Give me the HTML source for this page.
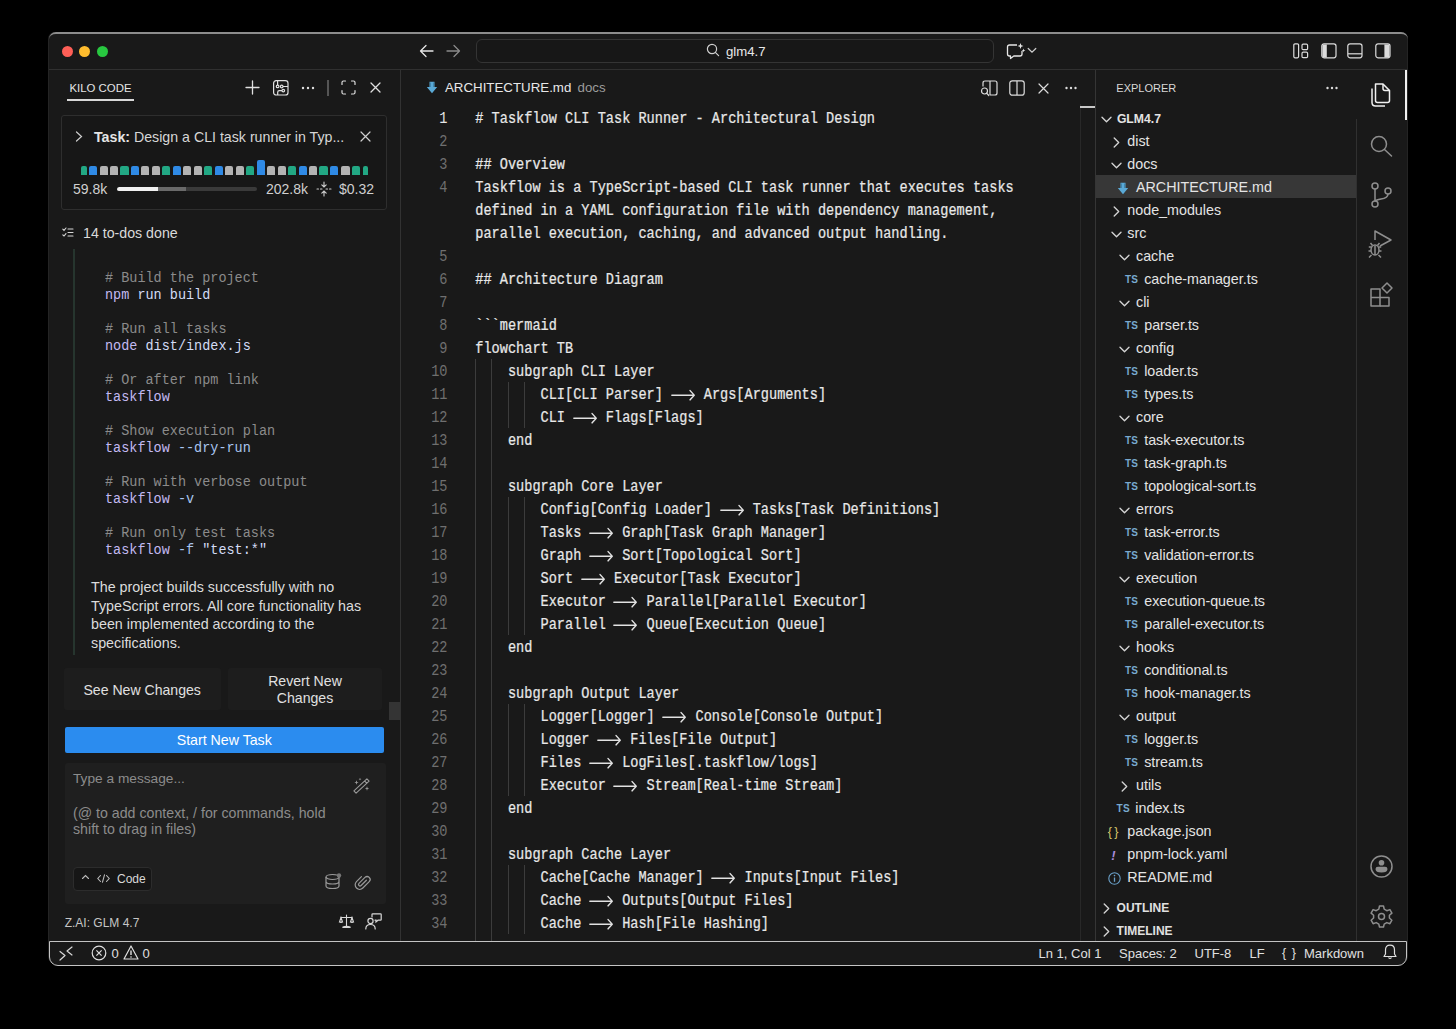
<!DOCTYPE html>
<html><head><meta charset="utf-8">
<style>
*{margin:0;padding:0;box-sizing:border-box}
html,body{width:1456px;height:1029px;overflow:hidden;background:#000}
body{position:relative;font-family:"Liberation Sans",sans-serif;color:#d4d4d4}
.a{position:absolute}
.t{position:absolute;white-space:pre;line-height:1}
svg{position:absolute;overflow:visible}
</style></head><body>
<div class="a" style="left:48px;top:32px;width:1360px;height:933px;background:#191919;border-left:1px solid #242424;border-right:1px solid #242424;border-radius:7px 7px 9px 9px;overflow:hidden"></div>
<div class="a" style="left:48.5px;top:32px;width:1359px;height:12px;border-top:2px solid #8c8c8c;border-radius:7px 7px 0 0"></div>
<div class="a" style="left:49px;top:69px;width:1358px;height:1px;background:#303030;"></div>
<div class="a" style="left:61.7px;top:45.5px;width:11px;height:11px;border-radius:50%;background:#fe5f57"></div>
<div class="a" style="left:79.3px;top:45.5px;width:11px;height:11px;border-radius:50%;background:#febc2e"></div>
<div class="a" style="left:96.7px;top:45.5px;width:11px;height:11px;border-radius:50%;background:#28c840"></div>
<svg style="left:419px;top:44px" width="15" height="14" viewBox="0 0 15 14" ><path d="M1.5 7H14M7 1.5L1.5 7L7 12.5" fill="none" stroke="#e6e6e6" stroke-width="1.3" stroke-linecap="round" stroke-linejoin="round"/></svg>
<svg style="left:446px;top:44px" width="15" height="14" viewBox="0 0 15 14" ><path d="M1 7H13.5M8 1.5L13.5 7L8 12.5" fill="none" stroke="#8a8a8a" stroke-width="1.3" stroke-linecap="round" stroke-linejoin="round"/></svg>
<div class="a" style="left:476px;top:39px;width:518px;height:24px;border:1px solid #343434;border-radius:6px;background:#171717"></div>
<svg style="left:706px;top:43px" width="14" height="14" viewBox="0 0 14 14" ><circle cx="6" cy="6" r="4.6" fill="none" stroke="#cfcfcf" stroke-width="1.2"/><path d="M9.3 9.3L12.6 12.6" stroke="#cfcfcf" stroke-width="1.2" stroke-linecap="round"/></svg>
<div class="t" style="left:726.0px;top:44.65px;font-size:13.2px;color:#e8e8e8;">glm4.7</div>
<svg style="left:1006px;top:42px" width="20" height="18" viewBox="0 0 20 18" ><path d="M11 3H3.5Q1.5 3 1.5 5V12Q1.5 14 3.5 14H4.5V16.5L7.8 14H14Q16 14 16 12V9" fill="none" stroke="#e6e6e6" stroke-width="1.3" stroke-linejoin="round"/><path d="M14.5 1L15.3 3.2L17.5 4L15.3 4.8L14.5 7L13.7 4.8L11.5 4L13.7 3.2Z M17.5 6.5L18 7.9L19.4 8.4L18 8.9L17.5 10.3L17 8.9L15.6 8.4L17 7.9Z" fill="#e6e6e6"/></svg>
<svg style="left:1027px;top:47px" width="10" height="7" viewBox="0 0 10 7" ><path d="M1.2 1.5L5 5.2L8.8 1.5" fill="none" stroke="#cfcfcf" stroke-width="1.2" stroke-linecap="round"/></svg>
<svg style="left:1293px;top:43px" width="16" height="16" viewBox="0 0 16 16" ><g fill="none" stroke="#dcdcdc" stroke-width="1.2"><rect x="0.8" y="0.8" width="4.8" height="14" rx="1.2"/><rect x="9" y="1.2" width="5.6" height="5.4" rx="1.2"/><rect x="9" y="9.2" width="5.6" height="5.4" rx="1.2"/></g></svg>
<svg style="left:1321px;top:43px" width="16" height="16" viewBox="0 0 16 16" ><rect x="0.8" y="0.8" width="14.2" height="14" rx="2.2" fill="none" stroke="#dcdcdc" stroke-width="1.2"/><path d="M1.4 3Q1.4 1.4 3 1.4H5.8V14.4H3Q1.4 14.4 1.4 12.8Z" fill="#dcdcdc"/></svg>
<svg style="left:1347px;top:43px" width="16" height="16" viewBox="0 0 16 16" ><g fill="none" stroke="#dcdcdc" stroke-width="1.2"><rect x="0.8" y="0.8" width="14.2" height="14" rx="2.2"/><path d="M1 10.8H15"/></g></svg>
<svg style="left:1375px;top:43px" width="16" height="16" viewBox="0 0 16 16" ><rect x="0.8" y="0.8" width="14.2" height="14" rx="2.2" fill="none" stroke="#dcdcdc" stroke-width="1.2"/><path d="M14.4 3Q14.4 1.4 12.8 1.4H9.4V14.4H12.8Q14.4 14.4 14.4 12.8Z" fill="#dcdcdc"/></svg>
<div class="a" style="left:400px;top:70px;width:1px;height:872px;background:#323232;"></div>
<div class="a" style="left:1095px;top:70px;width:1px;height:872px;background:#353535;"></div>
<div class="a" style="left:1356px;top:119px;width:1px;height:823px;background:#303030;"></div>
<div class="t" style="left:69.5px;top:82.77px;font-size:11.4px;color:#e6e6e6;">KILO CODE</div>
<div class="a" style="left:67px;top:99px;width:67px;height:1.5px;background:#d8d8d8;"></div>
<svg style="left:245px;top:80px" width="15" height="15" viewBox="0 0 15 15" ><path d="M7.5 1V14M1 7.5H14" stroke="#e0e0e0" stroke-width="1.3" stroke-linecap="round"/></svg>
<svg style="left:273px;top:80px" width="16" height="16" viewBox="0 0 16 16" ><g fill="none" stroke="#e0e0e0" stroke-width="1.2"><rect x="0.6" y="0.6" width="14.4" height="14.4" rx="2.6"/><path d="M4.6 0.8V5M10 6.5H15M4.7 15V12.2Q4.7 10.6 6.3 10.6H9"/><circle cx="4.6" cy="6.4" r="1.3"/><circle cx="8.7" cy="6.5" r="1.3"/><circle cx="10.3" cy="10.6" r="1.3"/></g></svg>
<svg style="left:301px;top:86px" width="14" height="4" viewBox="0 0 14 4" ><g fill="#e0e0e0"><circle cx="2" cy="2" r="1.2"/><circle cx="7" cy="2" r="1.2"/><circle cx="12" cy="2" r="1.2"/></g></svg>
<div class="a" style="left:327px;top:80px;width:1.5px;height:16px;background:#555;"></div>
<svg style="left:341px;top:80px" width="15" height="15" viewBox="0 0 15 15" ><path d="M1 4.5V2.5Q1 1 2.5 1H4.5M10.5 1H12.5Q14 1 14 2.5V4.5M14 10.5V12.5Q14 14 12.5 14H10.5M4.5 14H2.5Q1 14 1 12.5V10.5" fill="none" stroke="#e0e0e0" stroke-width="1.2" stroke-linecap="round"/></svg>
<svg style="left:370px;top:82px" width="11" height="11" viewBox="0 0 11 11" ><path d="M1 1L10 10M10 1L1 10" stroke="#e0e0e0" stroke-width="1.3" stroke-linecap="round"/></svg>
<div class="a" style="left:61px;top:115px;width:326px;height:95px;border:1px solid #2e2e2e;border-radius:3px;background:#171717"></div>
<svg style="left:75px;top:131px" width="8" height="11" viewBox="0 0 8 11" ><path d="M1.5 1L6.5 5.5L1.5 10" fill="none" stroke="#cfcfcf" stroke-width="1.2" stroke-linecap="round"/></svg>
<div class="t" style="left:94.0px;top:129.60px;font-size:14.2px;color:#d6d6d6;"><b style="color:#e4e4e4">Task:</b> Design a CLI task runner in Typ...</div>
<svg style="left:360px;top:131px" width="11" height="11" viewBox="0 0 11 11" ><path d="M1 1L10 10M10 1L1 10" stroke="#d0d0d0" stroke-width="1.2" stroke-linecap="round"/></svg>
<div class="a" style="left:81.0px;top:165.5px;width:6px;height:9.0px;background:#22a884;border-radius:2px 2px 0 0"></div>
<div class="a" style="left:89.1px;top:165.5px;width:8.2px;height:9.0px;background:#2f8ae6;border-radius:2px 2px 0 0"></div>
<div class="a" style="left:99.6px;top:165.5px;width:8.2px;height:9.0px;background:#b3b3b3;border-radius:2px 2px 0 0"></div>
<div class="a" style="left:110.1px;top:165.5px;width:8.2px;height:9.0px;background:#b3b3b3;border-radius:2px 2px 0 0"></div>
<div class="a" style="left:120.4px;top:165.5px;width:8.2px;height:9.0px;background:#22a884;border-radius:2px 2px 0 0"></div>
<div class="a" style="left:131.0px;top:165.5px;width:8.2px;height:9.0px;background:#2f8ae6;border-radius:2px 2px 0 0"></div>
<div class="a" style="left:141.3px;top:165.5px;width:8.2px;height:9.0px;background:#b3b3b3;border-radius:2px 2px 0 0"></div>
<div class="a" style="left:151.9px;top:165.5px;width:8.2px;height:9.0px;background:#b3b3b3;border-radius:2px 2px 0 0"></div>
<div class="a" style="left:162.3px;top:165.5px;width:8.2px;height:9.0px;background:#22a884;border-radius:2px 2px 0 0"></div>
<div class="a" style="left:172.9px;top:165.5px;width:8.2px;height:9.0px;background:#2f8ae6;border-radius:2px 2px 0 0"></div>
<div class="a" style="left:183.3px;top:165.5px;width:8.2px;height:9.0px;background:#b3b3b3;border-radius:2px 2px 0 0"></div>
<div class="a" style="left:193.6px;top:165.5px;width:8.2px;height:9.0px;background:#b3b3b3;border-radius:2px 2px 0 0"></div>
<div class="a" style="left:204.2px;top:165.5px;width:8.2px;height:9.0px;background:#22a884;border-radius:2px 2px 0 0"></div>
<div class="a" style="left:214.6px;top:165.5px;width:8.2px;height:9.0px;background:#2f8ae6;border-radius:2px 2px 0 0"></div>
<div class="a" style="left:224.9px;top:165.5px;width:8.2px;height:9.0px;background:#b3b3b3;border-radius:2px 2px 0 0"></div>
<div class="a" style="left:235.6px;top:165.5px;width:8.2px;height:9.0px;background:#b3b3b3;border-radius:2px 2px 0 0"></div>
<div class="a" style="left:246.1px;top:165.5px;width:8.2px;height:9.0px;background:#22a884;border-radius:2px 2px 0 0"></div>
<div class="a" style="left:256.5px;top:159.5px;width:8.2px;height:15.0px;background:#2f8ae6;border-radius:2px 2px 0 0"></div>
<div class="a" style="left:267.1px;top:165.5px;width:8.2px;height:9.0px;background:#b3b3b3;border-radius:2px 2px 0 0"></div>
<div class="a" style="left:277.5px;top:165.5px;width:8.2px;height:9.0px;background:#b3b3b3;border-radius:2px 2px 0 0"></div>
<div class="a" style="left:287.9px;top:165.5px;width:8.2px;height:9.0px;background:#22a884;border-radius:2px 2px 0 0"></div>
<div class="a" style="left:298.5px;top:165.5px;width:8.2px;height:9.0px;background:#2f8ae6;border-radius:2px 2px 0 0"></div>
<div class="a" style="left:308.9px;top:165.5px;width:8.2px;height:9.0px;background:#b3b3b3;border-radius:2px 2px 0 0"></div>
<div class="a" style="left:319.4px;top:165.5px;width:8.2px;height:9.0px;background:#22a884;border-radius:2px 2px 0 0"></div>
<div class="a" style="left:330.2px;top:165.5px;width:8.2px;height:9.0px;background:#2f8ae6;border-radius:2px 2px 0 0"></div>
<div class="a" style="left:341.4px;top:165.5px;width:8.2px;height:9.0px;background:#b3b3b3;border-radius:2px 2px 0 0"></div>
<div class="a" style="left:351.5px;top:165.5px;width:8.2px;height:9.0px;background:#22a884;border-radius:2px 2px 0 0"></div>
<div class="a" style="left:362.5px;top:165.5px;width:5px;height:9.0px;background:#22a884;border-radius:2px 2px 0 0"></div>
<div class="t" style="left:73.0px;top:182.17px;font-size:14px;color:#d0d0d0;">59.8k</div>
<div class="a" style="left:117px;top:186.5px;width:140px;height:4.5px;border-radius:3px;background:#3a3a3a;overflow:hidden"><div class="a" style="left:0;top:0;width:69px;height:5px;background:#6a6a6a"></div><div class="a" style="left:0;top:0;width:41px;height:5px;background:#f0f0f0;border-radius:3px 0 0 3px"></div></div>
<div class="t" style="left:266.0px;top:182.17px;font-size:14px;color:#d0d0d0;">202.8k</div>
<svg style="left:316px;top:181px" width="16" height="16" viewBox="0 0 16 16" ><path d="M8 1V6M5.8 3.8L8 6L10.2 3.8M8 15V10M5.8 12.2L8 10L10.2 12.2M1 8H2.5M4.5 8H6M10 8H11.5M13.5 8H15" fill="none" stroke="#cfcfcf" stroke-width="1.1" stroke-linecap="round"/></svg>
<div class="t" style="left:339.0px;top:182.17px;font-size:14px;color:#d0d0d0;">$0.32</div>
<svg style="left:62px;top:227px" width="12" height="11" viewBox="0 0 12 11" ><path d="M0.8 2.2L2 3.4L4 1M0.8 7.8L2 9L4 6.6M6 2H11M6 5.5H11M6 9H11" fill="none" stroke="#d8d8d8" stroke-width="1.1" stroke-linecap="round"/></svg>
<div class="t" style="left:83.0px;top:225.70px;font-size:14.2px;color:#dadada;">14 to-dos done</div>
<div class="a" style="left:73px;top:249px;width:1.5px;height:406px;background:#26352e;"></div>
<div class="t" style="left:105.0px;top:272.31px;font-size:13.5px;color:#ccc;font-family:'Liberation Mono',monospace;transform:scaleY(1.08);transform-origin:0 5.74px;"><span style="color:#8b8b8b"># Build the project</span></div>
<div class="t" style="left:105.0px;top:289.31px;font-size:13.5px;color:#ccc;font-family:'Liberation Mono',monospace;transform:scaleY(1.08);transform-origin:0 5.74px;"><span style="color:#c3b9f2">npm</span><span style="color:#d3dcf5"> run build</span></div>
<div class="t" style="left:105.0px;top:323.31px;font-size:13.5px;color:#ccc;font-family:'Liberation Mono',monospace;transform:scaleY(1.08);transform-origin:0 5.74px;"><span style="color:#8b8b8b"># Run all tasks</span></div>
<div class="t" style="left:105.0px;top:340.31px;font-size:13.5px;color:#ccc;font-family:'Liberation Mono',monospace;transform:scaleY(1.08);transform-origin:0 5.74px;"><span style="color:#c3b9f2">node</span><span style="color:#d3dcf5"> dist/index.js</span></div>
<div class="t" style="left:105.0px;top:374.31px;font-size:13.5px;color:#ccc;font-family:'Liberation Mono',monospace;transform:scaleY(1.08);transform-origin:0 5.74px;"><span style="color:#8b8b8b"># Or after npm link</span></div>
<div class="t" style="left:105.0px;top:391.31px;font-size:13.5px;color:#ccc;font-family:'Liberation Mono',monospace;transform:scaleY(1.08);transform-origin:0 5.74px;"><span style="color:#c3b9f2">taskflow</span></div>
<div class="t" style="left:105.0px;top:425.31px;font-size:13.5px;color:#ccc;font-family:'Liberation Mono',monospace;transform:scaleY(1.08);transform-origin:0 5.74px;"><span style="color:#8b8b8b"># Show execution plan</span></div>
<div class="t" style="left:105.0px;top:442.31px;font-size:13.5px;color:#ccc;font-family:'Liberation Mono',monospace;transform:scaleY(1.08);transform-origin:0 5.74px;"><span style="color:#c3b9f2">taskflow</span><span style="color:#a9c6ef"> --dry-run</span></div>
<div class="t" style="left:105.0px;top:476.31px;font-size:13.5px;color:#ccc;font-family:'Liberation Mono',monospace;transform:scaleY(1.08);transform-origin:0 5.74px;"><span style="color:#8b8b8b"># Run with verbose output</span></div>
<div class="t" style="left:105.0px;top:493.31px;font-size:13.5px;color:#ccc;font-family:'Liberation Mono',monospace;transform:scaleY(1.08);transform-origin:0 5.74px;"><span style="color:#c3b9f2">taskflow</span><span style="color:#a9c6ef"> -v</span></div>
<div class="t" style="left:105.0px;top:527.31px;font-size:13.5px;color:#ccc;font-family:'Liberation Mono',monospace;transform:scaleY(1.08);transform-origin:0 5.74px;"><span style="color:#8b8b8b"># Run only test tasks</span></div>
<div class="t" style="left:105.0px;top:544.31px;font-size:13.5px;color:#ccc;font-family:'Liberation Mono',monospace;transform:scaleY(1.08);transform-origin:0 5.74px;"><span style="color:#c3b9f2">taskflow</span><span style="color:#a9c6ef"> -f </span><span style="color:#d3dcf5">&quot;test:*&quot;</span></div>
<div class="t" style="left:91.0px;top:580.12px;font-size:14.3px;color:#dcdcdc;">The project builds successfully with no</div>
<div class="t" style="left:91.0px;top:598.72px;font-size:14.3px;color:#dcdcdc;">TypeScript errors. All core functionality has</div>
<div class="t" style="left:91.0px;top:617.32px;font-size:14.3px;color:#dcdcdc;">been implemented according to the</div>
<div class="t" style="left:91.0px;top:635.92px;font-size:14.3px;color:#dcdcdc;">specifications.</div>
<div class="a" style="left:64px;top:668px;width:157px;height:42px;background:#1d1d1d;border-radius:3px"></div>
<div class="t" style="left:83.4px;top:683.09px;font-size:14.1px;color:#e0e0e0;">See New Changes</div>
<div class="a" style="left:228px;top:668px;width:154px;height:42px;background:#1d1d1d;border-radius:3px"></div>
<div class="t" style="left:228px;top:673px;width:154px;text-align:center;font-size:14.1px;line-height:17px;color:#e0e0e0;white-space:normal">Revert New<br>Changes</div>
<div class="a" style="left:389px;top:702px;width:11px;height:18px;background:#343434;"></div>
<div class="a" style="left:64.5px;top:727px;width:319.5px;height:26px;background:#2b8cef;border-radius:2px"></div>
<div class="t" style="left:64.5px;top:733.3px;width:319.5px;text-align:center;font-size:14.2px;color:#fff">Start New Task</div>
<div class="a" style="left:64.5px;top:763px;width:321px;height:141px;background:#1f1f1f;border-radius:3px"></div>
<div class="t" style="left:73.0px;top:772.22px;font-size:13.7px;color:#8c8c8c;">Type a message...</div>
<div class="t" style="left:73.0px;top:805.50px;font-size:14.2px;color:#8c8c8c;">(@ to add context, / for commands, hold</div>
<div class="t" style="left:73.0px;top:822.40px;font-size:14.2px;color:#8c8c8c;">shift to drag in files)</div>
<svg style="left:353px;top:777px" width="18" height="18" viewBox="0 0 18 18" ><path d="M3.1 16.2L0.9 13.8L13.9 1.8L16.1 4.2Z M11.6 3.9L13.9 6.3" fill="none" stroke="#9a9a9a" stroke-width="1.1" stroke-linejoin="round"/><g fill="#9a9a9a"><path d="M3.5 3.3L4.1 4.9L5.7 5.5L4.1 6.1L3.5 7.7L2.9 6.1L1.3 5.5L2.9 4.9Z"/><path d="M7 0.8L7.4 1.8L8.4 2.2L7.4 2.6L7 3.6L6.6 2.6L5.6 2.2L6.6 1.8Z"/><path d="M14 9.3L14.6 10.9L16.2 11.5L14.6 12.1L14 13.7L13.4 12.1L11.8 11.5L13.4 10.9Z"/></g></svg>
<div class="a" style="left:72.5px;top:867px;width:79px;height:24px;border:1px solid #2c2c2c;border-radius:4px;background:#161616"></div>
<svg style="left:81px;top:874px" width="9" height="6" viewBox="0 0 9 6" ><path d="M1.5 4.5L4.5 1.5L7.5 4.5" fill="none" stroke="#bbb" stroke-width="1.1" stroke-linecap="round"/></svg>
<svg style="left:97px;top:874px" width="13" height="9" viewBox="0 0 13 9" ><path d="M3.5 1.5L0.8 4.5L3.5 7.5M9.5 1.5L12.2 4.5L9.5 7.5M7.5 0.8L5.5 8.2" fill="none" stroke="#bbb" stroke-width="1.1" stroke-linecap="round"/></svg>
<div class="t" style="left:117.0px;top:872.86px;font-size:12px;color:#d8d8d8;">Code</div>
<svg style="left:325px;top:873px" width="17" height="17" viewBox="0 0 17 17" ><g fill="none" stroke="#9a9a9a" stroke-width="1.2"><ellipse cx="7.5" cy="4" rx="6.5" ry="2.5"/><path d="M1 4V13Q1 15.5 7.5 15.5Q14 15.5 14 13V4M1 8.5Q1 11 7.5 11Q14 11 14 8.5"/></g><circle cx="14" cy="2.5" r="2.2" fill="#777"/></svg>
<svg style="left:354px;top:873px" width="17" height="18" viewBox="0 0 17 18" ><g transform="rotate(45 8.5 9) translate(3.5 0)"><path d="M6.5 5V12.5A1.5 1.5 0 0 1 3.5 12.5V4A3 3 0 0 1 9.5 4V13A4.5 4.5 0 0 1 0.5 13V6" fill="none" stroke="#9a9a9a" stroke-width="1.2" stroke-linecap="round"/></g></svg>
<div class="t" style="left:64.7px;top:917.06px;font-size:12px;color:#c6c6c6;">Z.AI: GLM 4.7</div>
<svg style="left:339px;top:914px" width="15" height="15" viewBox="0 0 15 15" ><g fill="none" stroke="#d8d8d8" stroke-width="1.1" stroke-linecap="round"><path d="M7.5 1V13M2 3.5H13M4 13.5H11"/><path d="M2 3.5L0.5 8H3.5Z M13 3.5L11.5 8H14.5Z"/></g><path d="M0.5 8Q2 10 3.5 8Z M11.5 8Q13 10 14.5 8Z M3.5 13.8H11.5V12.5Q7.5 11 3.5 12.5Z" fill="#d8d8d8"/></svg>
<svg style="left:365px;top:913px" width="17" height="17" viewBox="0 0 17 17" ><g fill="none" stroke="#d8d8d8" stroke-width="1.2" stroke-linecap="round"><circle cx="5.5" cy="8" r="2.6"/><path d="M0.8 16Q0.8 11.5 5.5 11.5Q10.2 11.5 10.2 16"/><path d="M7 4V1.5Q7 0.8 7.7 0.8H15.5Q16.2 0.8 16.2 1.5V6.5Q16.2 7.2 15.5 7.2H13L11 9V7.2H10"/></g></svg>
<svg style="left:426px;top:81px" width="12" height="13" viewBox="0 0 12 13" ><path d="M3.5 0.8H8.5V6H11.2L6 12.2L0.8 6H3.5Z" fill="#5aa9d6"/><path d="M4.5 1.5V6M7.5 1.5V6" stroke="#2d6f96" stroke-width="0.6"/></svg>
<div class="t" style="left:445.0px;top:81.36px;font-size:13.3px;color:#e8e8e8;">ARCHITECTURE.md</div>
<div class="t" style="left:577.5px;top:81.36px;font-size:13.3px;color:#9c9c9c;">docs</div>
<svg style="left:980px;top:80px" width="18" height="17" viewBox="0 0 18 17" ><g fill="none" stroke="#dcdcdc" stroke-width="1.2"><path d="M3 6.5V3Q3 1 5 1H15Q17 1 17 3V13Q17 15 15 15H10"/><path d="M10 1V15"/><circle cx="4.5" cy="11" r="3"/><path d="M6.6 13.1L8.8 15.5" stroke-linecap="round"/></g></svg>
<svg style="left:1009px;top:80px" width="16" height="16" viewBox="0 0 16 16" ><g fill="none" stroke="#dcdcdc" stroke-width="1.2"><rect x="0.8" y="0.8" width="14.4" height="14.4" rx="2.5"/><path d="M8 1V15"/></g></svg>
<svg style="left:1038px;top:83px" width="11" height="11" viewBox="0 0 11 11" ><path d="M1 1L10 10M10 1L1 10" stroke="#dcdcdc" stroke-width="1.2" stroke-linecap="round"/></svg>
<svg style="left:1065px;top:86px" width="12" height="4" viewBox="0 0 12 4" ><g fill="#dcdcdc"><circle cx="1.5" cy="2" r="1.2"/><circle cx="6" cy="2" r="1.2"/><circle cx="10.5" cy="2" r="1.2"/></g></svg>
<div class="a" style="left:1080px;top:104px;width:1px;height:838px;background:#282828;"></div>
<div class="a" style="left:1080px;top:105.5px;width:15px;height:2px;background:#c8c8c8;"></div>
<div class="a" style="left:475.0px;top:359px;width:1px;height:582px;background:#3c3c3c;"></div>
<div class="a" style="left:491.3px;top:359px;width:1px;height:582px;background:#3c3c3c;"></div>
<div class="a" style="left:507.6px;top:382px;width:1px;height:46px;background:#3c3c3c;"></div>
<div class="a" style="left:524.0px;top:382px;width:1px;height:46px;background:#3c3c3c;"></div>
<div class="a" style="left:507.6px;top:497px;width:1px;height:138px;background:#3c3c3c;"></div>
<div class="a" style="left:524.0px;top:497px;width:1px;height:138px;background:#3c3c3c;"></div>
<div class="a" style="left:507.6px;top:704px;width:1px;height:92px;background:#3c3c3c;"></div>
<div class="a" style="left:524.0px;top:704px;width:1px;height:92px;background:#3c3c3c;"></div>
<div class="a" style="left:507.6px;top:865px;width:1px;height:69px;background:#3c3c3c;"></div>
<div class="a" style="left:524.0px;top:865px;width:1px;height:69px;background:#3c3c3c;"></div>
<div class="t" style="left:397px;top:112.33px;width:50.5px;text-align:right;font-size:13.6px;font-family:'Liberation Mono',monospace;color:#e6e6e6;transform:scaleY(1.16);transform-origin:0 5.78px">1</div>
<div class="t" style="left:475.3px;top:112.33px;font-size:13.6px;color:#e8e8e8;font-family:'Liberation Mono',monospace;transform:scaleY(1.16);transform-origin:0 5.78px;-webkit-text-stroke:0.2px #e8e8e8;"># Taskflow CLI Task Runner - Architectural Design</div>
<div class="t" style="left:397px;top:135.33px;width:50.5px;text-align:right;font-size:13.6px;font-family:'Liberation Mono',monospace;color:#6f6f6f;transform:scaleY(1.16);transform-origin:0 5.78px">2</div>
<div class="t" style="left:397px;top:158.33px;width:50.5px;text-align:right;font-size:13.6px;font-family:'Liberation Mono',monospace;color:#6f6f6f;transform:scaleY(1.16);transform-origin:0 5.78px">3</div>
<div class="t" style="left:475.3px;top:158.33px;font-size:13.6px;color:#e8e8e8;font-family:'Liberation Mono',monospace;transform:scaleY(1.16);transform-origin:0 5.78px;-webkit-text-stroke:0.2px #e8e8e8;">## Overview</div>
<div class="t" style="left:397px;top:181.33px;width:50.5px;text-align:right;font-size:13.6px;font-family:'Liberation Mono',monospace;color:#6f6f6f;transform:scaleY(1.16);transform-origin:0 5.78px">4</div>
<div class="t" style="left:475.3px;top:181.33px;font-size:13.6px;color:#e8e8e8;font-family:'Liberation Mono',monospace;transform:scaleY(1.16);transform-origin:0 5.78px;-webkit-text-stroke:0.2px #e8e8e8;">Taskflow is a TypeScript-based CLI task runner that executes tasks</div>
<div class="t" style="left:475.3px;top:204.33px;font-size:13.6px;color:#e8e8e8;font-family:'Liberation Mono',monospace;transform:scaleY(1.16);transform-origin:0 5.78px;-webkit-text-stroke:0.2px #e8e8e8;">defined in a YAML configuration file with dependency management,</div>
<div class="t" style="left:475.3px;top:227.33px;font-size:13.6px;color:#e8e8e8;font-family:'Liberation Mono',monospace;transform:scaleY(1.16);transform-origin:0 5.78px;-webkit-text-stroke:0.2px #e8e8e8;">parallel execution, caching, and advanced output handling.</div>
<div class="t" style="left:397px;top:250.33px;width:50.5px;text-align:right;font-size:13.6px;font-family:'Liberation Mono',monospace;color:#6f6f6f;transform:scaleY(1.16);transform-origin:0 5.78px">5</div>
<div class="t" style="left:397px;top:273.33px;width:50.5px;text-align:right;font-size:13.6px;font-family:'Liberation Mono',monospace;color:#6f6f6f;transform:scaleY(1.16);transform-origin:0 5.78px">6</div>
<div class="t" style="left:475.3px;top:273.33px;font-size:13.6px;color:#e8e8e8;font-family:'Liberation Mono',monospace;transform:scaleY(1.16);transform-origin:0 5.78px;-webkit-text-stroke:0.2px #e8e8e8;">## Architecture Diagram</div>
<div class="t" style="left:397px;top:296.33px;width:50.5px;text-align:right;font-size:13.6px;font-family:'Liberation Mono',monospace;color:#6f6f6f;transform:scaleY(1.16);transform-origin:0 5.78px">7</div>
<div class="t" style="left:397px;top:319.33px;width:50.5px;text-align:right;font-size:13.6px;font-family:'Liberation Mono',monospace;color:#6f6f6f;transform:scaleY(1.16);transform-origin:0 5.78px">8</div>
<div class="t" style="left:475.3px;top:319.33px;font-size:13.6px;color:#e8e8e8;font-family:'Liberation Mono',monospace;transform:scaleY(1.16);transform-origin:0 5.78px;-webkit-text-stroke:0.2px #e8e8e8;">```mermaid</div>
<div class="t" style="left:397px;top:342.33px;width:50.5px;text-align:right;font-size:13.6px;font-family:'Liberation Mono',monospace;color:#6f6f6f;transform:scaleY(1.16);transform-origin:0 5.78px">9</div>
<div class="t" style="left:475.3px;top:342.33px;font-size:13.6px;color:#e8e8e8;font-family:'Liberation Mono',monospace;transform:scaleY(1.16);transform-origin:0 5.78px;-webkit-text-stroke:0.2px #e8e8e8;">flowchart TB</div>
<div class="t" style="left:397px;top:365.33px;width:50.5px;text-align:right;font-size:13.6px;font-family:'Liberation Mono',monospace;color:#6f6f6f;transform:scaleY(1.16);transform-origin:0 5.78px">10</div>
<div class="t" style="left:475.3px;top:365.33px;font-size:13.6px;color:#e8e8e8;font-family:'Liberation Mono',monospace;transform:scaleY(1.16);transform-origin:0 5.78px;-webkit-text-stroke:0.2px #e8e8e8;">    subgraph CLI Layer</div>
<div class="t" style="left:397px;top:388.33px;width:50.5px;text-align:right;font-size:13.6px;font-family:'Liberation Mono',monospace;color:#6f6f6f;transform:scaleY(1.16);transform-origin:0 5.78px">11</div>
<div class="t" style="left:475.3px;top:388.33px;font-size:13.6px;color:#e8e8e8;font-family:'Liberation Mono',monospace;transform:scaleY(1.16);transform-origin:0 5.78px;-webkit-text-stroke:0.2px #e8e8e8;">        CLI[CLI Parser] <span style="display:inline-block;width:24.48px;position:relative"><svg style="left:-0.5px;top:-8.5px" width="24.5" height="10" viewBox="0 0 24.5 10"><path d="M0.8 5H23.2M19 1L23.3 5L19 9" fill="none" stroke="#e2e2e2" stroke-width="1.3" stroke-linecap="round" stroke-linejoin="round"/></svg></span> Args[Arguments]</div>
<div class="t" style="left:397px;top:411.33px;width:50.5px;text-align:right;font-size:13.6px;font-family:'Liberation Mono',monospace;color:#6f6f6f;transform:scaleY(1.16);transform-origin:0 5.78px">12</div>
<div class="t" style="left:475.3px;top:411.33px;font-size:13.6px;color:#e8e8e8;font-family:'Liberation Mono',monospace;transform:scaleY(1.16);transform-origin:0 5.78px;-webkit-text-stroke:0.2px #e8e8e8;">        CLI <span style="display:inline-block;width:24.48px;position:relative"><svg style="left:-0.5px;top:-8.5px" width="24.5" height="10" viewBox="0 0 24.5 10"><path d="M0.8 5H23.2M19 1L23.3 5L19 9" fill="none" stroke="#e2e2e2" stroke-width="1.3" stroke-linecap="round" stroke-linejoin="round"/></svg></span> Flags[Flags]</div>
<div class="t" style="left:397px;top:434.33px;width:50.5px;text-align:right;font-size:13.6px;font-family:'Liberation Mono',monospace;color:#6f6f6f;transform:scaleY(1.16);transform-origin:0 5.78px">13</div>
<div class="t" style="left:475.3px;top:434.33px;font-size:13.6px;color:#e8e8e8;font-family:'Liberation Mono',monospace;transform:scaleY(1.16);transform-origin:0 5.78px;-webkit-text-stroke:0.2px #e8e8e8;">    end</div>
<div class="t" style="left:397px;top:457.33px;width:50.5px;text-align:right;font-size:13.6px;font-family:'Liberation Mono',monospace;color:#6f6f6f;transform:scaleY(1.16);transform-origin:0 5.78px">14</div>
<div class="t" style="left:397px;top:480.33px;width:50.5px;text-align:right;font-size:13.6px;font-family:'Liberation Mono',monospace;color:#6f6f6f;transform:scaleY(1.16);transform-origin:0 5.78px">15</div>
<div class="t" style="left:475.3px;top:480.33px;font-size:13.6px;color:#e8e8e8;font-family:'Liberation Mono',monospace;transform:scaleY(1.16);transform-origin:0 5.78px;-webkit-text-stroke:0.2px #e8e8e8;">    subgraph Core Layer</div>
<div class="t" style="left:397px;top:503.33px;width:50.5px;text-align:right;font-size:13.6px;font-family:'Liberation Mono',monospace;color:#6f6f6f;transform:scaleY(1.16);transform-origin:0 5.78px">16</div>
<div class="t" style="left:475.3px;top:503.33px;font-size:13.6px;color:#e8e8e8;font-family:'Liberation Mono',monospace;transform:scaleY(1.16);transform-origin:0 5.78px;-webkit-text-stroke:0.2px #e8e8e8;">        Config[Config Loader] <span style="display:inline-block;width:24.48px;position:relative"><svg style="left:-0.5px;top:-8.5px" width="24.5" height="10" viewBox="0 0 24.5 10"><path d="M0.8 5H23.2M19 1L23.3 5L19 9" fill="none" stroke="#e2e2e2" stroke-width="1.3" stroke-linecap="round" stroke-linejoin="round"/></svg></span> Tasks[Task Definitions]</div>
<div class="t" style="left:397px;top:526.33px;width:50.5px;text-align:right;font-size:13.6px;font-family:'Liberation Mono',monospace;color:#6f6f6f;transform:scaleY(1.16);transform-origin:0 5.78px">17</div>
<div class="t" style="left:475.3px;top:526.33px;font-size:13.6px;color:#e8e8e8;font-family:'Liberation Mono',monospace;transform:scaleY(1.16);transform-origin:0 5.78px;-webkit-text-stroke:0.2px #e8e8e8;">        Tasks <span style="display:inline-block;width:24.48px;position:relative"><svg style="left:-0.5px;top:-8.5px" width="24.5" height="10" viewBox="0 0 24.5 10"><path d="M0.8 5H23.2M19 1L23.3 5L19 9" fill="none" stroke="#e2e2e2" stroke-width="1.3" stroke-linecap="round" stroke-linejoin="round"/></svg></span> Graph[Task Graph Manager]</div>
<div class="t" style="left:397px;top:549.33px;width:50.5px;text-align:right;font-size:13.6px;font-family:'Liberation Mono',monospace;color:#6f6f6f;transform:scaleY(1.16);transform-origin:0 5.78px">18</div>
<div class="t" style="left:475.3px;top:549.33px;font-size:13.6px;color:#e8e8e8;font-family:'Liberation Mono',monospace;transform:scaleY(1.16);transform-origin:0 5.78px;-webkit-text-stroke:0.2px #e8e8e8;">        Graph <span style="display:inline-block;width:24.48px;position:relative"><svg style="left:-0.5px;top:-8.5px" width="24.5" height="10" viewBox="0 0 24.5 10"><path d="M0.8 5H23.2M19 1L23.3 5L19 9" fill="none" stroke="#e2e2e2" stroke-width="1.3" stroke-linecap="round" stroke-linejoin="round"/></svg></span> Sort[Topological Sort]</div>
<div class="t" style="left:397px;top:572.33px;width:50.5px;text-align:right;font-size:13.6px;font-family:'Liberation Mono',monospace;color:#6f6f6f;transform:scaleY(1.16);transform-origin:0 5.78px">19</div>
<div class="t" style="left:475.3px;top:572.33px;font-size:13.6px;color:#e8e8e8;font-family:'Liberation Mono',monospace;transform:scaleY(1.16);transform-origin:0 5.78px;-webkit-text-stroke:0.2px #e8e8e8;">        Sort <span style="display:inline-block;width:24.48px;position:relative"><svg style="left:-0.5px;top:-8.5px" width="24.5" height="10" viewBox="0 0 24.5 10"><path d="M0.8 5H23.2M19 1L23.3 5L19 9" fill="none" stroke="#e2e2e2" stroke-width="1.3" stroke-linecap="round" stroke-linejoin="round"/></svg></span> Executor[Task Executor]</div>
<div class="t" style="left:397px;top:595.33px;width:50.5px;text-align:right;font-size:13.6px;font-family:'Liberation Mono',monospace;color:#6f6f6f;transform:scaleY(1.16);transform-origin:0 5.78px">20</div>
<div class="t" style="left:475.3px;top:595.33px;font-size:13.6px;color:#e8e8e8;font-family:'Liberation Mono',monospace;transform:scaleY(1.16);transform-origin:0 5.78px;-webkit-text-stroke:0.2px #e8e8e8;">        Executor <span style="display:inline-block;width:24.48px;position:relative"><svg style="left:-0.5px;top:-8.5px" width="24.5" height="10" viewBox="0 0 24.5 10"><path d="M0.8 5H23.2M19 1L23.3 5L19 9" fill="none" stroke="#e2e2e2" stroke-width="1.3" stroke-linecap="round" stroke-linejoin="round"/></svg></span> Parallel[Parallel Executor]</div>
<div class="t" style="left:397px;top:618.33px;width:50.5px;text-align:right;font-size:13.6px;font-family:'Liberation Mono',monospace;color:#6f6f6f;transform:scaleY(1.16);transform-origin:0 5.78px">21</div>
<div class="t" style="left:475.3px;top:618.33px;font-size:13.6px;color:#e8e8e8;font-family:'Liberation Mono',monospace;transform:scaleY(1.16);transform-origin:0 5.78px;-webkit-text-stroke:0.2px #e8e8e8;">        Parallel <span style="display:inline-block;width:24.48px;position:relative"><svg style="left:-0.5px;top:-8.5px" width="24.5" height="10" viewBox="0 0 24.5 10"><path d="M0.8 5H23.2M19 1L23.3 5L19 9" fill="none" stroke="#e2e2e2" stroke-width="1.3" stroke-linecap="round" stroke-linejoin="round"/></svg></span> Queue[Execution Queue]</div>
<div class="t" style="left:397px;top:641.33px;width:50.5px;text-align:right;font-size:13.6px;font-family:'Liberation Mono',monospace;color:#6f6f6f;transform:scaleY(1.16);transform-origin:0 5.78px">22</div>
<div class="t" style="left:475.3px;top:641.33px;font-size:13.6px;color:#e8e8e8;font-family:'Liberation Mono',monospace;transform:scaleY(1.16);transform-origin:0 5.78px;-webkit-text-stroke:0.2px #e8e8e8;">    end</div>
<div class="t" style="left:397px;top:664.33px;width:50.5px;text-align:right;font-size:13.6px;font-family:'Liberation Mono',monospace;color:#6f6f6f;transform:scaleY(1.16);transform-origin:0 5.78px">23</div>
<div class="t" style="left:397px;top:687.33px;width:50.5px;text-align:right;font-size:13.6px;font-family:'Liberation Mono',monospace;color:#6f6f6f;transform:scaleY(1.16);transform-origin:0 5.78px">24</div>
<div class="t" style="left:475.3px;top:687.33px;font-size:13.6px;color:#e8e8e8;font-family:'Liberation Mono',monospace;transform:scaleY(1.16);transform-origin:0 5.78px;-webkit-text-stroke:0.2px #e8e8e8;">    subgraph Output Layer</div>
<div class="t" style="left:397px;top:710.33px;width:50.5px;text-align:right;font-size:13.6px;font-family:'Liberation Mono',monospace;color:#6f6f6f;transform:scaleY(1.16);transform-origin:0 5.78px">25</div>
<div class="t" style="left:475.3px;top:710.33px;font-size:13.6px;color:#e8e8e8;font-family:'Liberation Mono',monospace;transform:scaleY(1.16);transform-origin:0 5.78px;-webkit-text-stroke:0.2px #e8e8e8;">        Logger[Logger] <span style="display:inline-block;width:24.48px;position:relative"><svg style="left:-0.5px;top:-8.5px" width="24.5" height="10" viewBox="0 0 24.5 10"><path d="M0.8 5H23.2M19 1L23.3 5L19 9" fill="none" stroke="#e2e2e2" stroke-width="1.3" stroke-linecap="round" stroke-linejoin="round"/></svg></span> Console[Console Output]</div>
<div class="t" style="left:397px;top:733.33px;width:50.5px;text-align:right;font-size:13.6px;font-family:'Liberation Mono',monospace;color:#6f6f6f;transform:scaleY(1.16);transform-origin:0 5.78px">26</div>
<div class="t" style="left:475.3px;top:733.33px;font-size:13.6px;color:#e8e8e8;font-family:'Liberation Mono',monospace;transform:scaleY(1.16);transform-origin:0 5.78px;-webkit-text-stroke:0.2px #e8e8e8;">        Logger <span style="display:inline-block;width:24.48px;position:relative"><svg style="left:-0.5px;top:-8.5px" width="24.5" height="10" viewBox="0 0 24.5 10"><path d="M0.8 5H23.2M19 1L23.3 5L19 9" fill="none" stroke="#e2e2e2" stroke-width="1.3" stroke-linecap="round" stroke-linejoin="round"/></svg></span> Files[File Output]</div>
<div class="t" style="left:397px;top:756.33px;width:50.5px;text-align:right;font-size:13.6px;font-family:'Liberation Mono',monospace;color:#6f6f6f;transform:scaleY(1.16);transform-origin:0 5.78px">27</div>
<div class="t" style="left:475.3px;top:756.33px;font-size:13.6px;color:#e8e8e8;font-family:'Liberation Mono',monospace;transform:scaleY(1.16);transform-origin:0 5.78px;-webkit-text-stroke:0.2px #e8e8e8;">        Files <span style="display:inline-block;width:24.48px;position:relative"><svg style="left:-0.5px;top:-8.5px" width="24.5" height="10" viewBox="0 0 24.5 10"><path d="M0.8 5H23.2M19 1L23.3 5L19 9" fill="none" stroke="#e2e2e2" stroke-width="1.3" stroke-linecap="round" stroke-linejoin="round"/></svg></span> LogFiles[.taskflow/logs]</div>
<div class="t" style="left:397px;top:779.33px;width:50.5px;text-align:right;font-size:13.6px;font-family:'Liberation Mono',monospace;color:#6f6f6f;transform:scaleY(1.16);transform-origin:0 5.78px">28</div>
<div class="t" style="left:475.3px;top:779.33px;font-size:13.6px;color:#e8e8e8;font-family:'Liberation Mono',monospace;transform:scaleY(1.16);transform-origin:0 5.78px;-webkit-text-stroke:0.2px #e8e8e8;">        Executor <span style="display:inline-block;width:24.48px;position:relative"><svg style="left:-0.5px;top:-8.5px" width="24.5" height="10" viewBox="0 0 24.5 10"><path d="M0.8 5H23.2M19 1L23.3 5L19 9" fill="none" stroke="#e2e2e2" stroke-width="1.3" stroke-linecap="round" stroke-linejoin="round"/></svg></span> Stream[Real-time Stream]</div>
<div class="t" style="left:397px;top:802.33px;width:50.5px;text-align:right;font-size:13.6px;font-family:'Liberation Mono',monospace;color:#6f6f6f;transform:scaleY(1.16);transform-origin:0 5.78px">29</div>
<div class="t" style="left:475.3px;top:802.33px;font-size:13.6px;color:#e8e8e8;font-family:'Liberation Mono',monospace;transform:scaleY(1.16);transform-origin:0 5.78px;-webkit-text-stroke:0.2px #e8e8e8;">    end</div>
<div class="t" style="left:397px;top:825.33px;width:50.5px;text-align:right;font-size:13.6px;font-family:'Liberation Mono',monospace;color:#6f6f6f;transform:scaleY(1.16);transform-origin:0 5.78px">30</div>
<div class="t" style="left:397px;top:848.33px;width:50.5px;text-align:right;font-size:13.6px;font-family:'Liberation Mono',monospace;color:#6f6f6f;transform:scaleY(1.16);transform-origin:0 5.78px">31</div>
<div class="t" style="left:475.3px;top:848.33px;font-size:13.6px;color:#e8e8e8;font-family:'Liberation Mono',monospace;transform:scaleY(1.16);transform-origin:0 5.78px;-webkit-text-stroke:0.2px #e8e8e8;">    subgraph Cache Layer</div>
<div class="t" style="left:397px;top:871.33px;width:50.5px;text-align:right;font-size:13.6px;font-family:'Liberation Mono',monospace;color:#6f6f6f;transform:scaleY(1.16);transform-origin:0 5.78px">32</div>
<div class="t" style="left:475.3px;top:871.33px;font-size:13.6px;color:#e8e8e8;font-family:'Liberation Mono',monospace;transform:scaleY(1.16);transform-origin:0 5.78px;-webkit-text-stroke:0.2px #e8e8e8;">        Cache[Cache Manager] <span style="display:inline-block;width:24.48px;position:relative"><svg style="left:-0.5px;top:-8.5px" width="24.5" height="10" viewBox="0 0 24.5 10"><path d="M0.8 5H23.2M19 1L23.3 5L19 9" fill="none" stroke="#e2e2e2" stroke-width="1.3" stroke-linecap="round" stroke-linejoin="round"/></svg></span> Inputs[Input Files]</div>
<div class="t" style="left:397px;top:894.33px;width:50.5px;text-align:right;font-size:13.6px;font-family:'Liberation Mono',monospace;color:#6f6f6f;transform:scaleY(1.16);transform-origin:0 5.78px">33</div>
<div class="t" style="left:475.3px;top:894.33px;font-size:13.6px;color:#e8e8e8;font-family:'Liberation Mono',monospace;transform:scaleY(1.16);transform-origin:0 5.78px;-webkit-text-stroke:0.2px #e8e8e8;">        Cache <span style="display:inline-block;width:24.48px;position:relative"><svg style="left:-0.5px;top:-8.5px" width="24.5" height="10" viewBox="0 0 24.5 10"><path d="M0.8 5H23.2M19 1L23.3 5L19 9" fill="none" stroke="#e2e2e2" stroke-width="1.3" stroke-linecap="round" stroke-linejoin="round"/></svg></span> Outputs[Output Files]</div>
<div class="t" style="left:397px;top:917.33px;width:50.5px;text-align:right;font-size:13.6px;font-family:'Liberation Mono',monospace;color:#6f6f6f;transform:scaleY(1.16);transform-origin:0 5.78px">34</div>
<div class="t" style="left:475.3px;top:917.33px;font-size:13.6px;color:#e8e8e8;font-family:'Liberation Mono',monospace;transform:scaleY(1.16);transform-origin:0 5.78px;-webkit-text-stroke:0.2px #e8e8e8;">        Cache <span style="display:inline-block;width:24.48px;position:relative"><svg style="left:-0.5px;top:-8.5px" width="24.5" height="10" viewBox="0 0 24.5 10"><path d="M0.8 5H23.2M19 1L23.3 5L19 9" fill="none" stroke="#e2e2e2" stroke-width="1.3" stroke-linecap="round" stroke-linejoin="round"/></svg></span> Hash[File Hashing]</div>
<div class="t" style="left:1116.3px;top:82.91px;font-size:11px;color:#d8d8d8;">EXPLORER</div>
<svg style="left:1326px;top:86px" width="12" height="4" viewBox="0 0 12 4" ><g fill="#dcdcdc"><circle cx="1.5" cy="2" r="1.2"/><circle cx="6" cy="2" r="1.2"/><circle cx="10.5" cy="2" r="1.2"/></g></svg>
<div class="a" style="left:1096px;top:175px;width:260px;height:23px;background:#373737;"></div>
<svg style="left:1101px;top:116.0px" width="11" height="7" viewBox="0 0 11 7" ><path d="M1 1.2L5.5 5.7L10 1.2" fill="none" stroke="#d4d4d4" stroke-width="1.35" stroke-linecap="round" stroke-linejoin="round"/></svg>
<div class="t" style="left:1116.9px;top:113.19px;font-size:12.2px;color:#e4e4e4;font-weight:bold;">GLM4.7</div>
<svg style="left:1112.5px;top:137.0px" width="7" height="11" viewBox="0 0 7 11" ><path d="M1.2 1L5.7 5.5L1.2 10" fill="none" stroke="#d4d4d4" stroke-width="1.35" stroke-linecap="round" stroke-linejoin="round"/></svg>
<div class="t" style="left:1127.3px;top:134.42px;font-size:14.3px;color:#e4e4e4;">dist</div>
<svg style="left:1110.5px;top:162.0px" width="11" height="7" viewBox="0 0 11 7" ><path d="M1 1.2L5.5 5.7L10 1.2" fill="none" stroke="#d4d4d4" stroke-width="1.35" stroke-linecap="round" stroke-linejoin="round"/></svg>
<div class="t" style="left:1127.3px;top:157.42px;font-size:14.3px;color:#e4e4e4;">docs</div>
<svg style="left:1117px;top:182.0px" width="12" height="13" viewBox="0 0 12 13" ><path d="M3.5 0.8H8.5V6H11.2L6 12.2L0.8 6H3.5Z" fill="#5aa9d6"/><path d="M4.5 1.5V6M7.5 1.5V6" stroke="#2d6f96" stroke-width="0.6"/></svg>
<div class="t" style="left:1136.0px;top:180.42px;font-size:14.3px;color:#e4e4e4;">ARCHITECTURE.md</div>
<svg style="left:1112.5px;top:206.0px" width="7" height="11" viewBox="0 0 7 11" ><path d="M1.2 1L5.7 5.5L1.2 10" fill="none" stroke="#d4d4d4" stroke-width="1.35" stroke-linecap="round" stroke-linejoin="round"/></svg>
<div class="t" style="left:1127.3px;top:203.42px;font-size:14.3px;color:#e4e4e4;">node_modules</div>
<svg style="left:1110.5px;top:231.0px" width="11" height="7" viewBox="0 0 11 7" ><path d="M1 1.2L5.5 5.7L10 1.2" fill="none" stroke="#d4d4d4" stroke-width="1.35" stroke-linecap="round" stroke-linejoin="round"/></svg>
<div class="t" style="left:1127.3px;top:226.42px;font-size:14.3px;color:#e4e4e4;">src</div>
<svg style="left:1119px;top:254.0px" width="11" height="7" viewBox="0 0 11 7" ><path d="M1 1.2L5.5 5.7L10 1.2" fill="none" stroke="#d4d4d4" stroke-width="1.35" stroke-linecap="round" stroke-linejoin="round"/></svg>
<div class="t" style="left:1136.0px;top:249.42px;font-size:14.3px;color:#e4e4e4;">cache</div>
<div class="t" style="left:1125.0px;top:275.25px;font-size:10px;color:#78a9cf;font-weight:bold;letter-spacing:0.2px;">TS</div>
<div class="t" style="left:1144.2px;top:272.42px;font-size:14.3px;color:#e4e4e4;">cache-manager.ts</div>
<svg style="left:1119px;top:300.0px" width="11" height="7" viewBox="0 0 11 7" ><path d="M1 1.2L5.5 5.7L10 1.2" fill="none" stroke="#d4d4d4" stroke-width="1.35" stroke-linecap="round" stroke-linejoin="round"/></svg>
<div class="t" style="left:1136.0px;top:295.42px;font-size:14.3px;color:#e4e4e4;">cli</div>
<div class="t" style="left:1125.0px;top:321.25px;font-size:10px;color:#78a9cf;font-weight:bold;letter-spacing:0.2px;">TS</div>
<div class="t" style="left:1144.2px;top:318.42px;font-size:14.3px;color:#e4e4e4;">parser.ts</div>
<svg style="left:1119px;top:346.0px" width="11" height="7" viewBox="0 0 11 7" ><path d="M1 1.2L5.5 5.7L10 1.2" fill="none" stroke="#d4d4d4" stroke-width="1.35" stroke-linecap="round" stroke-linejoin="round"/></svg>
<div class="t" style="left:1136.0px;top:341.42px;font-size:14.3px;color:#e4e4e4;">config</div>
<div class="t" style="left:1125.0px;top:367.25px;font-size:10px;color:#78a9cf;font-weight:bold;letter-spacing:0.2px;">TS</div>
<div class="t" style="left:1144.2px;top:364.42px;font-size:14.3px;color:#e4e4e4;">loader.ts</div>
<div class="t" style="left:1125.0px;top:390.25px;font-size:10px;color:#78a9cf;font-weight:bold;letter-spacing:0.2px;">TS</div>
<div class="t" style="left:1144.2px;top:387.42px;font-size:14.3px;color:#e4e4e4;">types.ts</div>
<svg style="left:1119px;top:415.0px" width="11" height="7" viewBox="0 0 11 7" ><path d="M1 1.2L5.5 5.7L10 1.2" fill="none" stroke="#d4d4d4" stroke-width="1.35" stroke-linecap="round" stroke-linejoin="round"/></svg>
<div class="t" style="left:1136.0px;top:410.42px;font-size:14.3px;color:#e4e4e4;">core</div>
<div class="t" style="left:1125.0px;top:436.25px;font-size:10px;color:#78a9cf;font-weight:bold;letter-spacing:0.2px;">TS</div>
<div class="t" style="left:1144.2px;top:433.42px;font-size:14.3px;color:#e4e4e4;">task-executor.ts</div>
<div class="t" style="left:1125.0px;top:459.25px;font-size:10px;color:#78a9cf;font-weight:bold;letter-spacing:0.2px;">TS</div>
<div class="t" style="left:1144.2px;top:456.42px;font-size:14.3px;color:#e4e4e4;">task-graph.ts</div>
<div class="t" style="left:1125.0px;top:482.25px;font-size:10px;color:#78a9cf;font-weight:bold;letter-spacing:0.2px;">TS</div>
<div class="t" style="left:1144.2px;top:479.42px;font-size:14.3px;color:#e4e4e4;">topological-sort.ts</div>
<svg style="left:1119px;top:507.0px" width="11" height="7" viewBox="0 0 11 7" ><path d="M1 1.2L5.5 5.7L10 1.2" fill="none" stroke="#d4d4d4" stroke-width="1.35" stroke-linecap="round" stroke-linejoin="round"/></svg>
<div class="t" style="left:1136.0px;top:502.42px;font-size:14.3px;color:#e4e4e4;">errors</div>
<div class="t" style="left:1125.0px;top:528.25px;font-size:10px;color:#78a9cf;font-weight:bold;letter-spacing:0.2px;">TS</div>
<div class="t" style="left:1144.2px;top:525.42px;font-size:14.3px;color:#e4e4e4;">task-error.ts</div>
<div class="t" style="left:1125.0px;top:551.25px;font-size:10px;color:#78a9cf;font-weight:bold;letter-spacing:0.2px;">TS</div>
<div class="t" style="left:1144.2px;top:548.42px;font-size:14.3px;color:#e4e4e4;">validation-error.ts</div>
<svg style="left:1119px;top:576.0px" width="11" height="7" viewBox="0 0 11 7" ><path d="M1 1.2L5.5 5.7L10 1.2" fill="none" stroke="#d4d4d4" stroke-width="1.35" stroke-linecap="round" stroke-linejoin="round"/></svg>
<div class="t" style="left:1136.0px;top:571.42px;font-size:14.3px;color:#e4e4e4;">execution</div>
<div class="t" style="left:1125.0px;top:597.25px;font-size:10px;color:#78a9cf;font-weight:bold;letter-spacing:0.2px;">TS</div>
<div class="t" style="left:1144.2px;top:594.42px;font-size:14.3px;color:#e4e4e4;">execution-queue.ts</div>
<div class="t" style="left:1125.0px;top:620.25px;font-size:10px;color:#78a9cf;font-weight:bold;letter-spacing:0.2px;">TS</div>
<div class="t" style="left:1144.2px;top:617.42px;font-size:14.3px;color:#e4e4e4;">parallel-executor.ts</div>
<svg style="left:1119px;top:645.0px" width="11" height="7" viewBox="0 0 11 7" ><path d="M1 1.2L5.5 5.7L10 1.2" fill="none" stroke="#d4d4d4" stroke-width="1.35" stroke-linecap="round" stroke-linejoin="round"/></svg>
<div class="t" style="left:1136.0px;top:640.42px;font-size:14.3px;color:#e4e4e4;">hooks</div>
<div class="t" style="left:1125.0px;top:666.25px;font-size:10px;color:#78a9cf;font-weight:bold;letter-spacing:0.2px;">TS</div>
<div class="t" style="left:1144.2px;top:663.42px;font-size:14.3px;color:#e4e4e4;">conditional.ts</div>
<div class="t" style="left:1125.0px;top:689.25px;font-size:10px;color:#78a9cf;font-weight:bold;letter-spacing:0.2px;">TS</div>
<div class="t" style="left:1144.2px;top:686.42px;font-size:14.3px;color:#e4e4e4;">hook-manager.ts</div>
<svg style="left:1119px;top:714.0px" width="11" height="7" viewBox="0 0 11 7" ><path d="M1 1.2L5.5 5.7L10 1.2" fill="none" stroke="#d4d4d4" stroke-width="1.35" stroke-linecap="round" stroke-linejoin="round"/></svg>
<div class="t" style="left:1136.0px;top:709.42px;font-size:14.3px;color:#e4e4e4;">output</div>
<div class="t" style="left:1125.0px;top:735.25px;font-size:10px;color:#78a9cf;font-weight:bold;letter-spacing:0.2px;">TS</div>
<div class="t" style="left:1144.2px;top:732.42px;font-size:14.3px;color:#e4e4e4;">logger.ts</div>
<div class="t" style="left:1125.0px;top:758.25px;font-size:10px;color:#78a9cf;font-weight:bold;letter-spacing:0.2px;">TS</div>
<div class="t" style="left:1144.2px;top:755.42px;font-size:14.3px;color:#e4e4e4;">stream.ts</div>
<svg style="left:1121px;top:781.0px" width="7" height="11" viewBox="0 0 7 11" ><path d="M1.2 1L5.7 5.5L1.2 10" fill="none" stroke="#d4d4d4" stroke-width="1.35" stroke-linecap="round" stroke-linejoin="round"/></svg>
<div class="t" style="left:1136.0px;top:778.42px;font-size:14.3px;color:#e4e4e4;">utils</div>
<div class="t" style="left:1116.6px;top:804.25px;font-size:10px;color:#78a9cf;font-weight:bold;letter-spacing:0.2px;">TS</div>
<div class="t" style="left:1135.3px;top:801.42px;font-size:14.3px;color:#e4e4e4;">index.ts</div>
<div class="t" style="left:1107.7px;top:825.94px;font-size:12.5px;color:#d7c46a;letter-spacing:-0.5px;">{ }</div>
<div class="t" style="left:1127.3px;top:824.42px;font-size:14.3px;color:#e4e4e4;">package.json</div>
<div class="t" style="left:1111.2px;top:848.51px;font-size:13px;color:#a78bdc;font-weight:bold;font-style:italic;">!</div>
<div class="t" style="left:1127.3px;top:847.42px;font-size:14.3px;color:#e4e4e4;">pnpm-lock.yaml</div>
<svg style="left:1107.7px;top:872.0px" width="13" height="13" viewBox="0 0 13 13" ><circle cx="6.5" cy="6.5" r="5.7" fill="none" stroke="#6aa0c8" stroke-width="1.1"/><path d="M6.5 5.5V9.8" stroke="#6aa0c8" stroke-width="1.3"/><circle cx="6.5" cy="3.6" r="0.8" fill="#6aa0c8"/></svg>
<div class="t" style="left:1127.3px;top:870.42px;font-size:14.3px;color:#e4e4e4;">README.md</div>
<div class="a" style="left:1096px;top:893px;width:260px;height:2px;overflow:hidden"><div class="t" style="left:31px;top:8px;font-size:14.3px;color:#dcdcdc">.taskflow.yaml</div></div>
<svg style="left:1103px;top:902.5px" width="7" height="11" viewBox="0 0 7 11" ><path d="M1.2 1L5.7 5.5L1.2 10" fill="none" stroke="#d4d4d4" stroke-width="1.35" stroke-linecap="round" stroke-linejoin="round"/></svg>
<div class="t" style="left:1116.6px;top:902.36px;font-size:12px;color:#e0e0e0;font-weight:bold;">OUTLINE</div>
<svg style="left:1103px;top:925.5px" width="7" height="11" viewBox="0 0 7 11" ><path d="M1.2 1L5.7 5.5L1.2 10" fill="none" stroke="#d4d4d4" stroke-width="1.35" stroke-linecap="round" stroke-linejoin="round"/></svg>
<div class="t" style="left:1116.6px;top:925.36px;font-size:12px;color:#e0e0e0;font-weight:bold;">TIMELINE</div>
<div class="a" style="left:1404.8px;top:70px;width:2.2px;height:50px;background:#f0f0f0;"></div>
<svg style="left:1369px;top:83px" width="23" height="24" viewBox="0 0 23 24" ><g fill="none" stroke="#f0f0f0" stroke-width="1.5" stroke-linejoin="round"><path d="M6.5 1H14L20.5 7.5V17.5Q20.5 19.5 18.5 19.5H8.5Q6.5 19.5 6.5 17.5Z"/><path d="M14 1V5.5Q14 7.5 16 7.5H20.5"/><path d="M3 5.5V19.5Q3 23 6.5 23H16"/></g></svg>
<svg style="left:1370px;top:135px" width="23" height="22" viewBox="0 0 23 22" ><g fill="none" stroke="#8e8e8e" stroke-width="1.5" stroke-linecap="round"><circle cx="9" cy="9" r="7.5"/><path d="M14.5 14.5L21.5 21"/></g></svg>
<svg style="left:1371px;top:182px" width="21" height="26" viewBox="0 0 21 26" ><g fill="none" stroke="#8e8e8e" stroke-width="1.5"><circle cx="4" cy="4" r="3"/><circle cx="4" cy="22" r="3"/><circle cx="17" cy="9" r="3"/><path d="M4 7V19M17 12Q17 16 10 17Q5 18 4 19"/></g></svg>
<svg style="left:1368px;top:229px" width="24" height="30" viewBox="0 0 24 30" ><g fill="none" stroke="#8e8e8e" stroke-width="1.5" stroke-linejoin="round"><path d="M7 11V2L23 11L12 17"/><ellipse cx="7" cy="21" rx="4" ry="5"/><path d="M3.5 18H0.8M3 22H0.5M3.5 26L1 28.5M10.5 18H13.2M11 22H13.5M10.5 26L13 28.5M4.5 16.5L2.5 14M9.5 16.5L11.5 14M7 17V26"/></g></svg>
<svg style="left:1370px;top:280px" width="24" height="28" viewBox="0 0 24 28" ><g fill="none" stroke="#8e8e8e" stroke-width="1.5" stroke-linejoin="round"><path d="M1 9H10V26H1Z"/><path d="M1 17.5H19V26H10"/><path d="M12 8L17 3L22 8L17 13Z"/></g></svg>
<svg style="left:1370px;top:855px" width="23" height="23" viewBox="0 0 23 23" ><circle cx="11.5" cy="11.5" r="10.5" fill="none" stroke="#8e8e8e" stroke-width="1.5"/><circle cx="11.5" cy="7.8" r="2.8" fill="#8e8e8e"/><path d="M5.5 14Q5.5 11.8 8 11.8H15Q17.5 11.8 17.5 14Q17.5 17.5 11.5 17.5Q5.5 17.5 5.5 14Z" fill="#8e8e8e"/></svg>
<svg style="left:1370px;top:905px" width="23" height="23" viewBox="0 0 23 23" ><g fill="none" stroke="#8e8e8e" stroke-width="1.5" stroke-linejoin="round"><path d="M9.5 1H13.5L14.2 4.2L16.8 5.7L19.9 4.6L21.9 8.1L19.4 10.3V13L21.9 15.2L19.9 18.7L16.8 17.6L14.2 19.1L13.5 22H9.5L8.8 19.1L6.2 17.6L3.1 18.7L1.1 15.2L3.6 13V10.3L1.1 8.1L3.1 4.6L6.2 5.7L8.8 4.2Z"/><circle cx="11.5" cy="11.6" r="3"/></g></svg>
<div class="a" style="left:49px;top:941px;width:1358px;height:24.5px;border:1.5px solid #c4c4c4;border-radius:0 0 9px 9px;background:#191919"></div>
<svg style="left:59px;top:946px" width="14" height="15" viewBox="0 0 14 15" ><path d="M1 14L6 9.5L1 5.5M13 1L8 5L13 9" fill="none" stroke="#d8d8d8" stroke-width="1.2" stroke-linecap="round" stroke-linejoin="round"/></svg>
<svg style="left:91px;top:945px" width="16" height="16" viewBox="0 0 16 16" ><circle cx="8" cy="8" r="6.8" fill="none" stroke="#e0e0e0" stroke-width="1.2"/><path d="M5.4 5.4L10.6 10.6M10.6 5.4L5.4 10.6" stroke="#e0e0e0" stroke-width="1.2"/></svg>
<div class="t" style="left:111.5px;top:946.81px;font-size:13px;color:#e0e0e0;">0</div>
<svg style="left:123px;top:945px" width="16" height="15" viewBox="0 0 16 15" ><path d="M8 1L15 14H1Z" fill="none" stroke="#e0e0e0" stroke-width="1.2" stroke-linejoin="round"/><path d="M8 5.5V10" stroke="#e0e0e0" stroke-width="1.4"/><circle cx="8" cy="12" r="0.8" fill="#e0e0e0"/></svg>
<div class="t" style="left:142.5px;top:946.81px;font-size:13px;color:#e0e0e0;">0</div>
<div class="t" style="left:1038.5px;top:946.81px;font-size:13px;color:#e0e0e0;">Ln 1, Col 1</div>
<div class="t" style="left:1119.0px;top:946.81px;font-size:13px;color:#e0e0e0;">Spaces: 2</div>
<div class="t" style="left:1194.5px;top:946.81px;font-size:13px;color:#e0e0e0;">UTF-8</div>
<div class="t" style="left:1249.5px;top:946.81px;font-size:13px;color:#e0e0e0;">LF</div>
<div class="t" style="left:1304.0px;top:946.81px;font-size:13px;color:#e0e0e0;">Markdown</div>
<div class="t" style="left:1282.0px;top:947.24px;font-size:12.5px;color:#e0e0e0;letter-spacing:1px;">{ }</div>
<svg style="left:1383px;top:944px" width="14" height="16" viewBox="0 0 14 16" ><path d="M7 1.2Q2.5 1.2 2.5 6V10L1 12.5H13L11.5 10V6Q11.5 1.2 7 1.2Z M5.5 13.5Q7 15.5 8.5 13.5" fill="none" stroke="#e0e0e0" stroke-width="1.2" stroke-linejoin="round"/></svg>
</body></html>
